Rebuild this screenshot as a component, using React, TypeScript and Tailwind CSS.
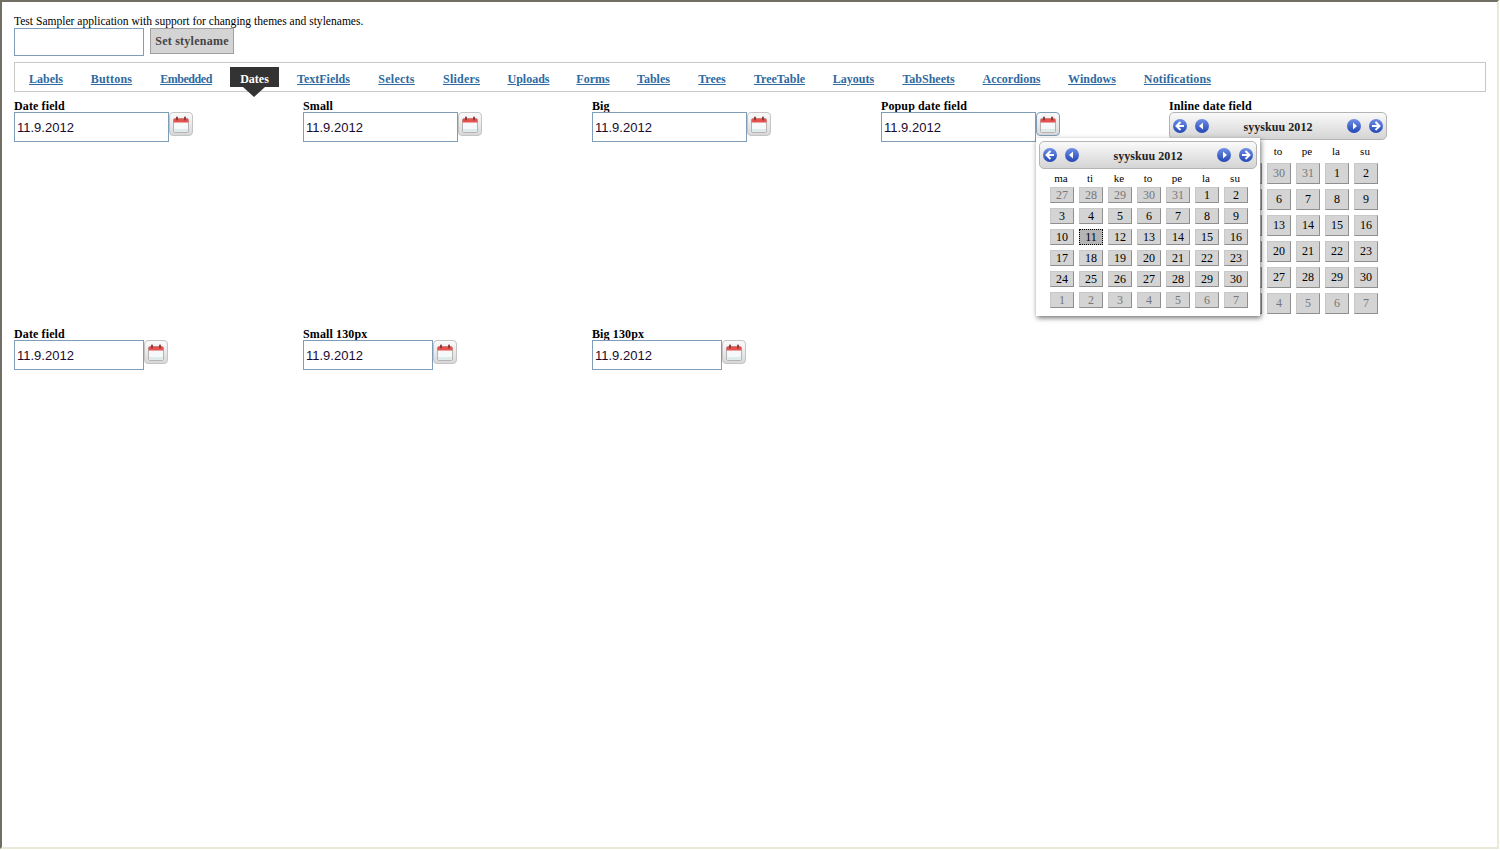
import React from "react";

const tabs = [
  ["Labels","w-[34px]"],["Buttons","w-[41px] tracking-[0.2px]"],["Embedded","w-[52px] tracking-[-0.45px]"],["Dates","w-[29px]"],["TextFields","w-[53px]"],["Selects","w-[37px] tracking-[0.25px]"],["Sliders","w-[37px] tracking-[0.25px]"],["Uploads","w-[41px]"],["Forms","w-[32px]"],["Tables","w-[33px]"],["Trees","w-[28px]"],["TreeTable","w-[51px]"],["Layouts","w-[41px]"],["TabSheets","w-[53px]"],["Accordions","w-[57px]"],["Windows","w-[48px]"],["Notifications","w-[67px] tracking-[0.15px]"],
];
const heads = ["ma","ti","ke","to","pe","la","su"];
const weeks = [
  [27,28,29,30,31,1,2],[3,4,5,6,7,8,9],[10,11,12,13,14,15,16],[17,18,19,20,21,22,23],[24,25,26,27,28,29,30],[1,2,3,4,5,6,7],
];

function CalIcon() {
  return (
    <svg width="16" height="17" viewBox="0 0 16 17">
      <rect x="0.5" y="2.5" width="15" height="14" rx="1.5" fill="#f6f9f9" stroke="#b9b2b2" />
      <rect x="1" y="13" width="14" height="3" fill="#dfeaea" />
      <path d="M0.5 6.5 V4 A1.5 1.5 0 0 1 2 2.5 H14 A1.5 1.5 0 0 1 15.5 4 V6.5 Z" fill="#e5514f" />
      <rect x="3" y="0.5" width="2" height="4" rx="1" fill="#8d3a35" />
      <rect x="11" y="0.5" width="2" height="4" rx="1" fill="#8d3a35" />
    </svg>
  );
}

function NavIcon({ kind }: { kind: "dl" | "l" | "r" | "dr" }) {
  return (
    <svg width="14" height="14" viewBox="0 0 14 14">
      <defs>
        <linearGradient id={"g" + kind} x1="0" y1="0" x2="0" y2="1">
          <stop offset="0" stopColor="#6f8fe6" />
          <stop offset="1" stopColor="#2347b5" />
        </linearGradient>
      </defs>
      <circle cx="7" cy="7" r="7" fill={"url(#g" + kind + ")"} />
      {kind === "dl" && <path d="M7.5 3 L3.5 7 L7.5 11 M4 7 H11" stroke="#fff" strokeWidth="2" fill="none" />}
      {kind === "dr" && <path d="M6.5 3 L10.5 7 L6.5 11 M10 7 H3" stroke="#fff" strokeWidth="2" fill="none" />}
      {kind === "l" && <path d="M8 3.5 V10.5 L4 7 Z" fill="#fff" />}
      {kind === "r" && <path d="M6 3.5 V10.5 L10 7 Z" fill="#fff" />}
    </svg>
  );
}

function DateField({ label, wide, focused, col }: { label: string; wide?: boolean; focused?: boolean; col?: string }) {
  return (
    <div className={col || "w-[289px]"}>
      <div className="h-[12px] leading-[12px] font-bold text-[12px] tracking-[0.12px] text-black">{label}</div>
      <div className="flex items-start">
        <div className={(wide ? "w-[155px]" : "w-[130px]") + " h-[30px] border border-[#7f9db9] bg-white pl-[2px] font-['Liberation_Sans',sans-serif] text-[13px] leading-[30px] text-[#1a0a30]"}>
          11.9.2012
        </div>
        <div className={(focused ? "border-[#7f9db9]" : "border-[#c4c4c4]") + " w-[24px] h-[24px] flex items-center justify-center rounded-[4px] border bg-gradient-to-b from-[#fbfbfb] to-[#d8d8d8]"}>
          <CalIcon />
        </div>
      </div>
    </div>
  );
}

function CalHeader() {
  return (
    <div className="h-[28px] flex items-center rounded-[5px] border border-[#b4b4b4] bg-gradient-to-b from-[#fafafa] to-[#d4d4d4] pl-[3px] pr-[3px]">
      <NavIcon kind="dl" />
      <span className="ml-[8px]"><NavIcon kind="l" /></span>
      <span className="pt-[1px] flex-1 text-center font-bold text-[12px] tracking-[0.05px] text-[#222]">syyskuu 2012</span>
      <NavIcon kind="r" />
      <span className="ml-[8px]"><NavIcon kind="dr" /></span>
    </div>
  );
}

function Cell({ n, out, sel, tall }: { n: number; out: boolean; sel: boolean; tall: boolean }) {
  const size = tall ? "h-[21px] leading-[18px]" : "h-[16px] leading-[15px]";
  const look = sel
    ? "bg-[#b4b4b4] border border-dotted border-black text-black"
    : "bg-[#d4d4d4] border border-t-[#c8c8c8] border-l-[#c8c8c8] border-b-[#8f8f8f] border-r-[#8f8f8f] " + (out ? "text-[#777]" : "text-black");
  return <div className={size + " w-[24px] box-border pl-[1px] text-center text-[12px] " + look}>{n}</div>;
}

function Grid({ tall }: { tall: boolean }) {
  return (
    <div className="w-[218px]">
      <div className={(tall ? "h-[14px] leading-[14px] mb-[5px]" : "h-[12px] leading-[12px] mb-[3px]") + " grid grid-cols-[repeat(7,24px)] gap-x-[5px] justify-center"}>
        {heads.map((h) => (
          <div key={h} className="text-center text-[11px] text-black">{h}</div>
        ))}
      </div>
      <div className="ml-[1px] grid grid-cols-[repeat(7,24px)] gap-x-[5px] gap-y-[5px] justify-center">
        {weeks.map((w, i) =>
          w.map((n, j) => (
            <Cell
              key={i + "-" + j}
              n={n}
              tall={tall}
              out={(i === 0 && j < 5) || i === 5}
              sel={!tall && i === 2 && j === 1}
            />
          ))
        )}
      </div>
    </div>
  );
}

export default function App() {
  return (
    <div className="relative h-[849px] w-[1499px] box-border border-2 border-t-[#716f64] border-l-[#716f64] border-r-[#ece9d8] border-b-[#ece9d8] bg-white pl-[12px] pr-[11px] pt-[13px] font-['Liberation_Serif',serif] text-[12px] text-black overflow-hidden">
      <div className="h-[13px] leading-[13px] text-[11.56px]">Test Sampler application with support for changing themes and stylenames.</div>
      <div className="flex items-start gap-[6px]">
        <div className="w-[130px] h-[28px] border border-[#7f9db9] bg-white" />
        <div className="w-[84px] h-[26px] border border-[#a0a0a0] bg-[#d4d4d4] text-center font-bold text-[#444] leading-[24px] tracking-[0.25px]">Set stylename</div>
      </div>
      <div className="mt-[6px] h-[30px] border border-[#c8c8c8] flex items-start pt-[4px]">
        {tabs.map(([t, w]) =>
          t === "Dates" ? (
            <div key={t} className="relative mx-[4px] h-[20px] px-[10px] bg-[#333] text-white font-bold leading-[24px] text-center whitespace-nowrap">
              <div className={w}>{t}</div>
              <div className="absolute left-[13px] top-[20px] w-0 h-0 border-l-[11px] border-r-[11px] border-t-[10px] border-l-transparent border-r-transparent border-t-[#333]" />
            </div>
          ) : (
            <div key={t} className="mx-[4px] h-[20px] px-[10px] text-[#2f6aa0] font-bold underline leading-[24px] whitespace-nowrap">
              <div className={w + " flex justify-center"}>{t}</div>
            </div>
          )
        )}
      </div>
      <div className="mt-[8px] h-[228px] flex items-start">
        <DateField label="Date field" wide />
        <DateField label="Small" wide />
        <DateField label="Big" wide />
        <div className="relative w-[288px]">
          <DateField label="Popup date field" wide focused col="w-[288px]" />
          <div className="absolute z-10 left-[155px] top-[38px] w-[224px] h-[178px] bg-white shadow-[1px_2px_5px_rgba(0,0,0,0.55)] px-[3px] pt-[3px]">
            <CalHeader />
            <div className="mt-[3px]"><Grid tall={false} /></div>
          </div>
        </div>
        <div className="w-[218px]">
          <div className="h-[12px] leading-[12px] font-bold tracking-[0.12px]">Inline date field</div>
          <CalHeader />
          <div className="mt-[4px]"><Grid tall /></div>
        </div>
      </div>
      <div className="flex items-start">
        <DateField label="Date field" />
        <DateField label="Small 130px" />
        <DateField label="Big 130px" />
      </div>
    </div>
  );
}
